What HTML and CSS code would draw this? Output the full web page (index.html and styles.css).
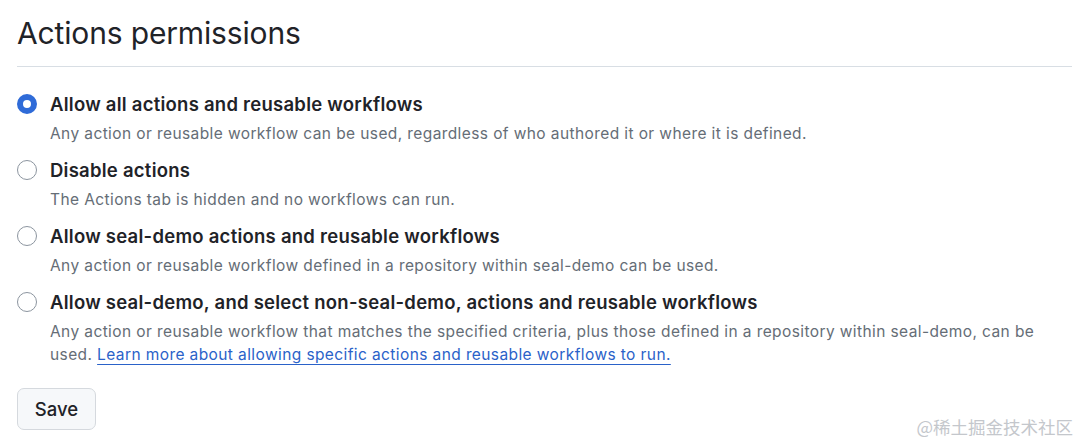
FILE: index.html
```html
<!DOCTYPE html>
<html>
<head>
<meta charset="utf-8">
<link rel="stylesheet" href="styles.css">
</head>
<body>
<div class="page">
  <h2 class="title">Actions permissions</h2>
  <div class="options">
    <div class="option">
      <span class="radio checked"></span>
      <div class="body">
        <div class="label">Allow all actions and reusable workflows</div>
        <div class="desc">Any action or reusable workflow can be used, regardless of who authored it or where it is defined.</div>
      </div>
    </div>
    <div class="option">
      <span class="radio"></span>
      <div class="body">
        <div class="label">Disable actions</div>
        <div class="desc">The Actions tab is hidden and no workflows can run.</div>
      </div>
    </div>
    <div class="option">
      <span class="radio"></span>
      <div class="body">
        <div class="label">Allow seal-demo actions and reusable workflows</div>
        <div class="desc">Any action or reusable workflow defined in a repository within seal-demo can be used.</div>
      </div>
    </div>
    <div class="option">
      <span class="radio"></span>
      <div class="body">
        <div class="label">Allow seal-demo, and select non-seal-demo, actions and reusable workflows</div>
        <div class="desc">Any action or reusable workflow that matches the specified criteria, plus those defined in a repository within seal-demo, can be used. <a class="link" href="#">Learn more about allowing specific actions and reusable workflows to run.</a></div>
      </div>
    </div>
  </div>
  <button class="btn">Save</button>
</div>
<div class="watermark">@稀土掘金技术社区</div>
</body>
</html>
```
FILE: styles.css
```css
html, body {
  margin: 0;
  padding: 0;
  background: #ffffff;
}
body {
  font-family: Inter, "Noto Sans", sans-serif;
  color: #1f2328;
  width: 1080px;
  height: 442px;
  overflow: hidden;
  position: relative;
}
.page {
  padding: 13px 8px 0 17px;
}
.title {
  margin: 0;
  font-size: 30px;
  line-height: 40px;
  font-weight: 400;
  letter-spacing: -0.15px;
  padding-bottom: 13px;
  border-bottom: 1px solid #d8dee4;
}
.options {
  margin-top: 25px;
  display: flex;
  flex-direction: column;
  gap: 13px;
}
.option {
  display: flex;
  align-items: flex-start;
  gap: 13px;
}
.body {
  width: 1000px;
}
.radio {
  flex: none;
  box-sizing: border-box;
  width: 20px;
  height: 20px;
  margin-top: 2px;
  border-radius: 50%;
  border: 1px solid #8c959f;
  background: #fff;
}
.radio.checked {
  border: 6px solid #2f6bd8;
}
.label {
  font-size: 18.5px;
  line-height: 24px;
  font-weight: 600;
  letter-spacing: 0.25px;
  color: #1f2328;
}
.desc {
  margin-top: 6px;
  font-size: 15.5px;
  line-height: 23px;
  letter-spacing: 0.4px;
  color: #656d76;
}
.link {
  color: #2a62c9;
  text-decoration: underline;
  text-underline-offset: 4px;
}
.btn {
  margin-top: 22px;
  width: 79px;
  height: 42px;
  border: 1px solid #d5d9de;
  border-radius: 7px;
  background: #f6f8fa;
  font-family: Inter, "Noto Sans", sans-serif;
  font-size: 18.5px;
  font-weight: 500;
  color: #1f2328;
  padding: 0;
}
.watermark {
  position: absolute;
  right: 7px;
  bottom: 4px;
  font-family: "Noto Sans CJK SC", sans-serif;
  font-size: 17.5px;
  line-height: 22px;
  color: #c4c7cc;
}
```
